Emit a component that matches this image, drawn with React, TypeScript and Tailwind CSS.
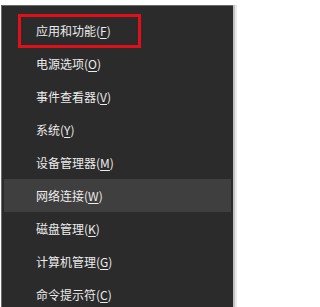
import * as React from "react";

const ITEMS: { label: string; key: string }[] = [
  { label: "应用和功能", key: "F" },
  { label: "电源选项", key: "O" },
  { label: "事件查看器", key: "V" },
  { label: "系统", key: "Y" },
  { label: "设备管理器", key: "M" },
  { label: "网络连接", key: "W" },
  { label: "磁盘管理", key: "K" },
  { label: "计算机管理", key: "G" },
  { label: "命令提示符", key: "C" },
];

export default function App() {
  return (
    <div
      className="flex h-[307px] w-[237px] overflow-hidden bg-white pt-[5px]"
      style={{ fontFamily: '"Noto Sans CJK SC", "Noto Sans", sans-serif' }}
    >
      <div className="ml-px flex w-[232px] flex-col border-l border-t border-[#6a6a6a] bg-[#2b2b2b] px-[2px] pt-[8px]">
        {ITEMS.map((item, i) => (
          <div
            key={item.key}
            className={
              "flex h-[33px] shrink-0 items-center pl-[14px] text-[12px] text-[#ececec] " +
              (i === 5 ? "bg-[#3f3f3f]" : "")
            }
          >
            {/* red annotation frame round the first item */}
            <div
              className={
                "flex h-[34px] w-[123px] shrink-0 items-center pl-[15px] " +
                (i === 0 ? "border-[3px] border-[#e0101a] pl-[15px]" : "border-[3px] border-transparent")
              }
            >
              {item.label}(<span className="underline underline-offset-2">{item.key}</span>)
            </div>
          </div>
        ))}
      </div>
      <div className="w-[2px] bg-[#c2c2c2]" />
      <div className="flex-1 bg-[#e9e9e9]" />
    </div>
  );
}
